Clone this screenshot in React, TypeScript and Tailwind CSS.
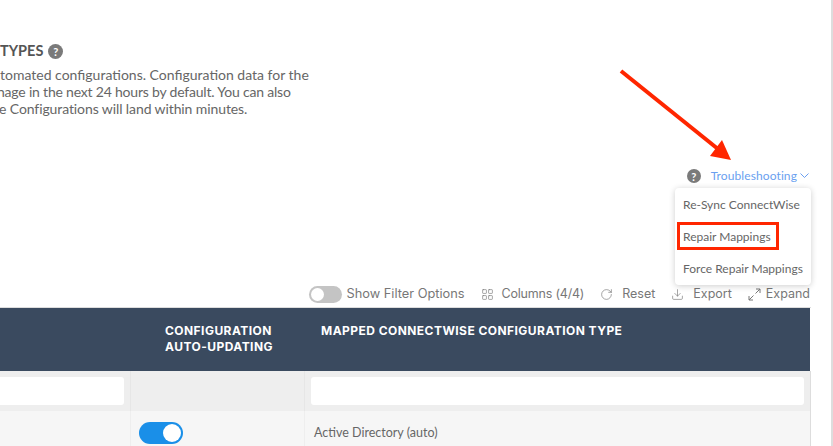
import React from 'react';
import { LayoutGrid, RotateCw, Download } from 'lucide-react';

const Help: React.FC<{ size: string }> = ({ size }) => (
  <span className={`${size} inline-flex shrink-0 items-center justify-center rounded-full bg-[#7a7a7a] text-[11px] font-bold leading-none text-white`}>
    ?
  </span>
);

const ToolbarItem: React.FC<{ icon: React.ReactNode; label: string; gap?: string; labelClass?: string }> = ({
  icon,
  label,
  gap = 'gap-[9px]',
  labelClass = '',
}) => (
  <span className={`flex items-center ${gap}`}>
    {icon}
    <span className={labelClass}>{label}</span>
  </span>
);

// 斜め二方向の矢印
const ExpandIcon = () => (
  <svg width="13" height="13" viewBox="0 0 13 13" fill="none" stroke="currentColor" strokeWidth="1">
    <path d="M7.5 5.5 L12 1 M8 1 H12 V5" />
    <path d="M5.5 7.5 L1 12 M1 8 V12 H5" />
  </svg>
);

export default function App() {
  return (
    <div className="relative h-[446px] w-[833px] overflow-hidden border-r-2 border-[#ddd] bg-white font-['Lato',sans-serif] text-[#666]">
      {/* 説明文 */}
      <div className="h-[165px] pt-[42px]">
        <h2 className="flex items-center gap-[5px] text-[14.5px] font-bold leading-[18px] text-[#555]">
          TYPES <Help size="h-[15px] w-[15px]" />
        </h2>
        <div className="mt-[6px] text-[14px] leading-[17px] text-[#666]">
          <p>tomated configurations. Configuration data for the</p>
          <p className="-ml-[3px] tracking-[-0.2px]">nage in the next 24 hours by default. You can also</p>
          <p className="-ml-[1px] tracking-[-0.1px]">e Configurations will land within minutes.</p>
        </div>
      </div>

      {/* トラブルシューティング */}
      <div className="flex h-[22px] w-[810px] items-center justify-end gap-[10px] pr-[1px]">
        <Help size="h-[14px] w-[14px]" />
        <span className="flex items-center gap-[3px] text-[12px] tracking-[0.1px] text-[#6a9ff0]">
          Troubleshooting
          <svg width="9" height="6" viewBox="0 0 9 6" fill="none" stroke="currentColor" strokeWidth="1">
            <path d="M0.5 0.5 L4.5 4.5 L8.5 0.5" />
          </svg>
        </span>
      </div>

      {/* ツールバー */}
      <div className="mt-[92px] flex h-[28px] w-[810px] items-center justify-end gap-[16px] pt-[2px] font-['Inter',sans-serif] text-[12.5px] text-[#777]">
        <span className="flex items-center gap-[4px]">
          <span className="flex h-[17px] w-[33px] items-center rounded-full bg-[#c4c4c4] pl-[2px]">
            <span className="h-[13px] w-[13px] rounded-full bg-white" />
          </span>
          <span className="text-[12.8px]">Show Filter Options</span>
        </span>
        <ToolbarItem
          icon={<LayoutGrid size={13} strokeWidth={1.2} />}
          label="Columns (4/4)"
          gap="gap-[8px]"
          labelClass="tracking-[-0.2px]"
        />
        <ToolbarItem icon={<RotateCw size={13} strokeWidth={1.2} />} label="Reset" />
        <ToolbarItem icon={<Download size={13} strokeWidth={1.2} />} label="Export" />
        <ToolbarItem icon={<ExpandIcon />} label="Expand" gap="gap-[5px]" />
      </div>

      {/* テーブル */}
      <div className="grid w-[811px] grid-cols-[131px_174px_1fr] grid-rows-[63px_40px_35px] border-t border-[#ddd]">
        <div className="bg-[#3a4a5f]" />
        <div className="bg-[#3a4a5f] pl-[34px] pt-[15px] font-['Inter',sans-serif] text-[12px] font-bold leading-[16px] tracking-[0.45px] text-white">
          CONFIGURATION
          <br />
          AUTO-UPDATING
        </div>
        <div className="border-r border-white bg-[#3a4a5f] pl-[16px] pt-[15px] font-['Inter',sans-serif] text-[12px] font-bold leading-[16px] tracking-[0.45px] text-white">
          MAPPED CONNECTWISE CONFIGURATION TYPE
        </div>

        <div className="border-r border-[#e6e6e6] bg-[#eee] py-[6px] pr-[6px]">
          <div className="h-[28px] rounded-r-[3px] bg-white" />
        </div>
        <div className="border-r border-[#e6e6e6] bg-[#eee]" />
        <div className="border-r border-[#ddd] bg-[#eee] px-[6px] py-[6px]">
          <div className="h-[28px] rounded-[3px] bg-white" />
        </div>

        <div className="border-r border-[#eee] bg-[#f6f6f6]" />
        <div className="flex items-start border-r border-[#eee] bg-[#f6f6f6] pl-[8px] pt-[11px]">
          <span className="flex h-[22px] w-[44px] items-center justify-end rounded-full bg-[#1a8fe8] pr-[2px]">
            <span className="h-[18px] w-[18px] rounded-full bg-white" />
          </span>
        </div>
        <div className="border-r border-[#ddd] bg-[#f6f6f6] pl-[9px] pt-[13px] text-[12.5px] leading-[18px] text-[#666]">
          Active Directory (auto)
        </div>
      </div>

      {/* ドロップダウン */}
      <div className="absolute left-[675px] top-[188px] h-[97px] w-[136px] rounded-[4px] bg-white pl-[8px] text-[12px] text-[#666] shadow-[0_1px_6px_rgba(0,0,0,0.2)]">
        <div className="flex h-[33px] items-center">Re-Sync ConnectWise</div>
        <div className="flex h-[32px] items-center">Repair Mappings</div>
        <div className="flex h-[32px] items-center">Force Repair Mappings</div>
      </div>

      {/* 注釈 */}
      <div className="absolute left-[677px] top-[222px] h-[28px] w-[102px] border-[3px] border-[#ff2600]" />
      <svg className="absolute left-[615px] top-[65px]" width="125" height="100" viewBox="615 65 125 100">
        <line x1="621" y1="71" x2="718" y2="149" stroke="#ff2600" strokeWidth="4" />
        <polygon points="722,140 710,156 731,160" fill="#ff2600" />
      </svg>
    </div>
  );
}
